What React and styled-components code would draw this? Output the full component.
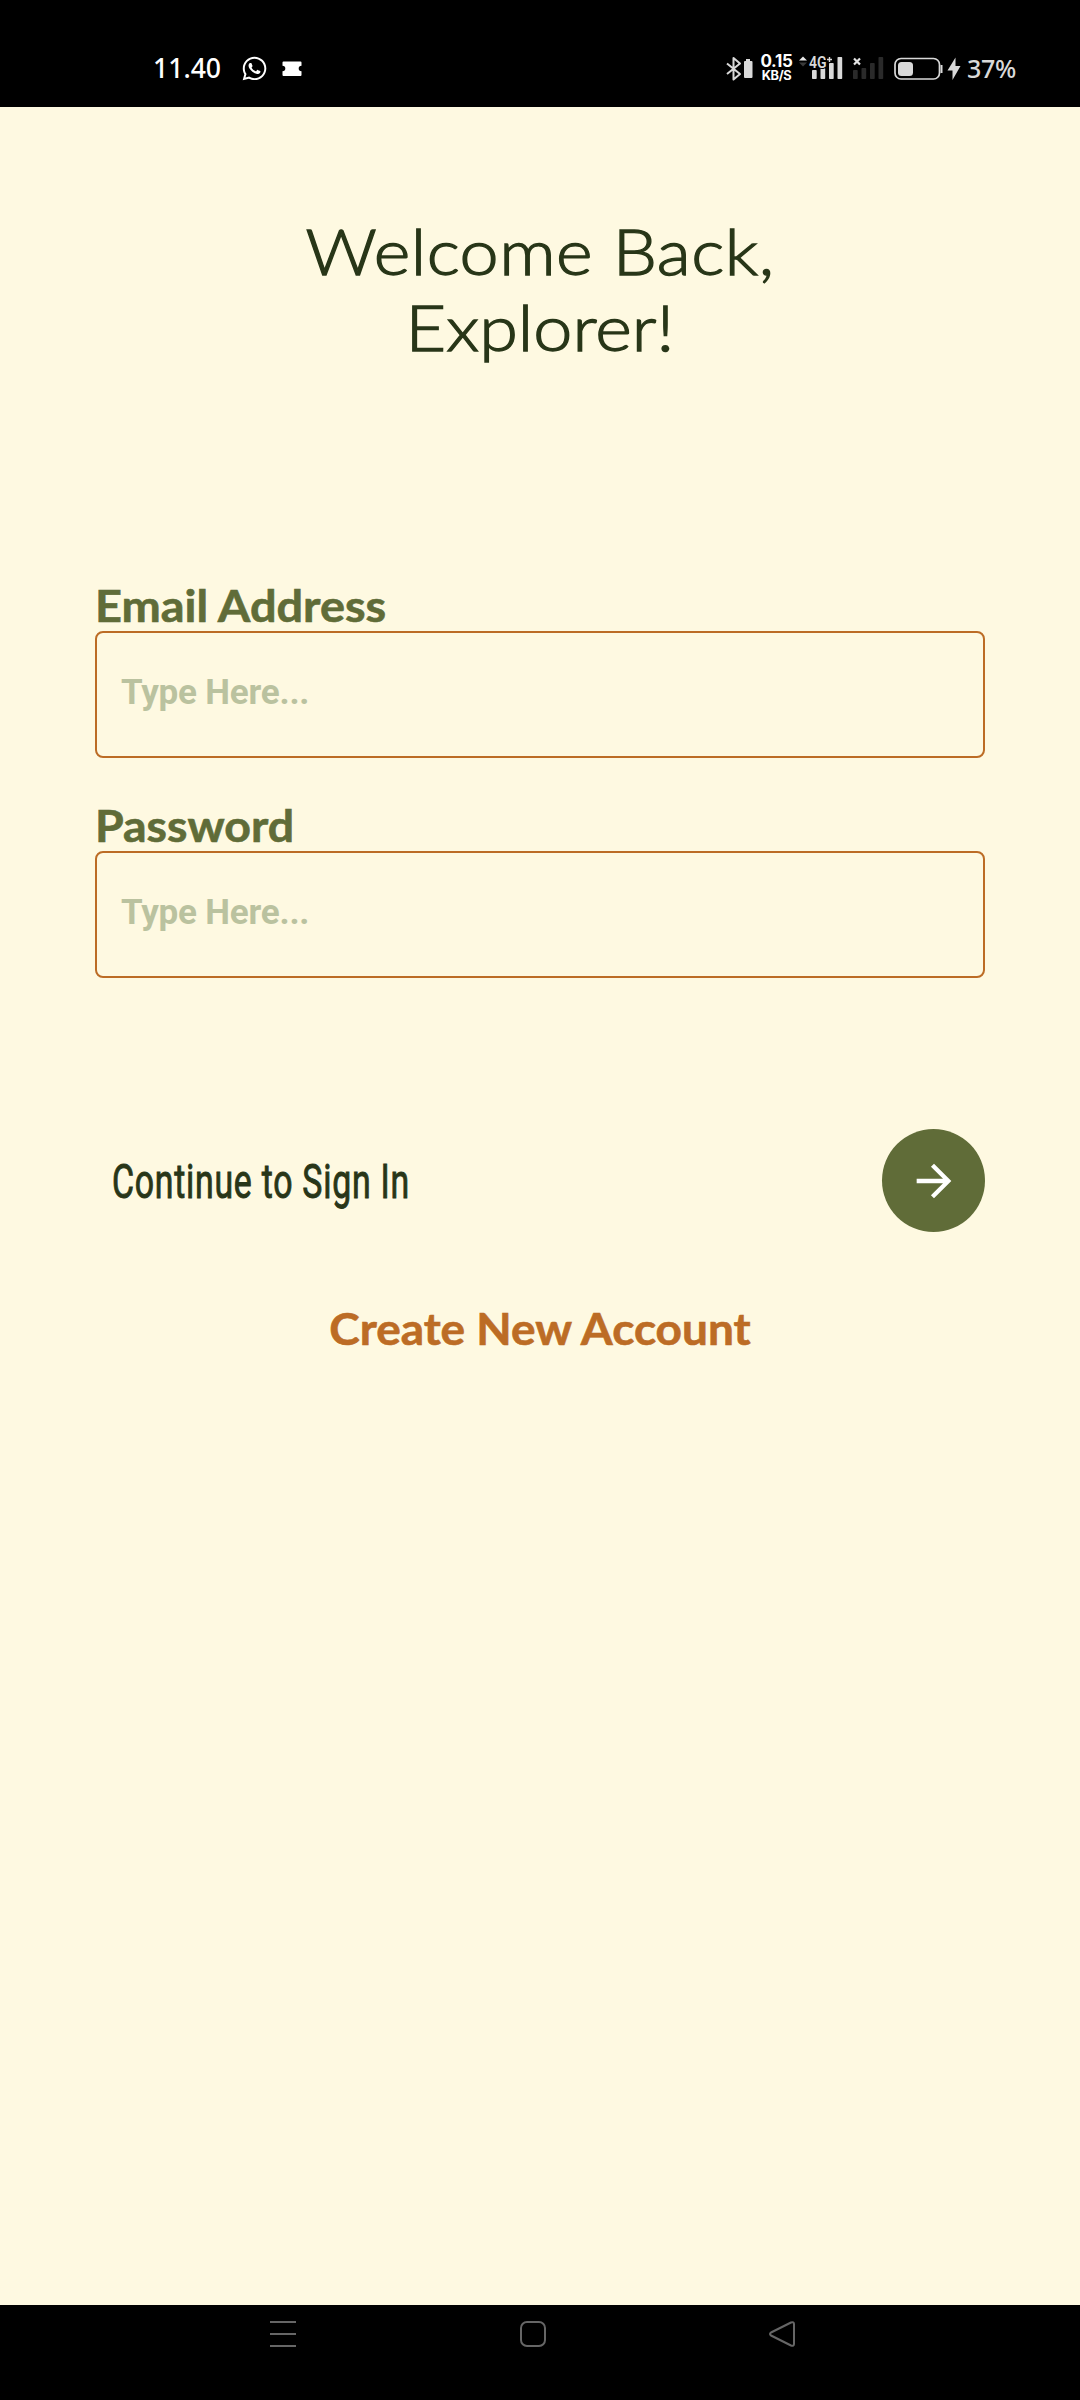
import React from "react";
import styled, { createGlobalStyle } from "styled-components";
import { MdArrowForward } from "react-icons/md";
import { FaWhatsapp } from "react-icons/fa";

const colors = {
  cream: "#fef9e1",
  olive: "#606c38",
  forest: "#283618",
  copper: "#bc6c25",
  hint: "#bac29f",
  status: "#d9d9d9",
  faint: "#2a2a2a",
  nav: "#666666",
};

const GlobalStyle = createGlobalStyle`
  * { box-sizing: border-box; }
  body { margin: 0; background: ${colors.cream}; }
`;

const Screen = styled.div`
  display: flex;
  flex-direction: column;
  width: 1080px;
  height: 2400px;
  overflow: hidden;
  background: ${colors.cream};
  font-family: Lato, "Open Sans", sans-serif;
`;

const StatusBar = styled.header`
  display: flex;
  justify-content: space-between;
  height: 107px;
  padding: 56px 65px 0 153px;
  background: #000;
  color: ${colors.status};
`;

const StatusGroup = styled.div`
  display: flex;
  align-items: center;
  height: 25px;
`;

const Clock = styled.span`
  width: 89px;
  font: 500 26.6px/25px "Noto Sans", sans-serif;
  color: #fff;
`;

const WhatsApp = styled(FaWhatsapp)`
  width: 27px;
  height: 27px;
  margin-left: -1px;
  color: #fff;
`;

const Glyph = styled.svg`
  display: block;
  flex: none;
  margin-left: ${(p) => p.$gap || 0}px;
  overflow: visible;
`;

const Speed = styled.div`
  width: 33px;
  margin-left: 8px;
  color: #fff;
  font-family: Inter, sans-serif;
  text-align: center;
  white-space: nowrap;
`;

const SpeedValue = styled.div`
  font-size: 17px;
  font-weight: 650;
  line-height: 14px;
  letter-spacing: -0.3px;
`;

const SpeedUnit = styled.div`
  font-size: 12.8px;
  font-weight: 700;
  line-height: 15px;
  letter-spacing: -0.4px;
`;

const Percent = styled.span`
  margin-left: 6px;
  width: 48px;
  font: 500 25px/25px "Noto Sans", sans-serif;
  letter-spacing: -0.3px;
  white-space: nowrap;
`;

const Content = styled.main`
  display: flex;
  flex: 1;
  flex-direction: column;
  padding: 106px 95px 0;
`;

const Title = styled.h1`
  margin: 0;
  color: ${colors.forest};
  font-size: 64px;
  font-weight: 300;
  line-height: 76px;
  text-align: center;
  white-space: nowrap;
  transform: scaleX(1.095);
  -webkit-text-stroke: 1.3px ${colors.forest};
`;

const TitleLine = styled.span`
  display: block;
  letter-spacing: ${(p) => p.$track || 0}px;
`;

const Form = styled.form`
  display: flex;
  flex-direction: column;
  gap: 42px;
  margin-top: 215px;
`;

const Field = styled.label`
  display: flex;
  flex-direction: column;
`;

const FieldLabel = styled.span`
  height: 51px;
  padding-top: 1px;
  color: ${colors.olive};
  font-size: 43px;
  font-weight: 700;
  line-height: 50px;
  white-space: nowrap;
  transform: scaleX(${(p) => p.$stretch});
  transform-origin: left center;
  -webkit-text-stroke: 0.6px ${colors.olive};
`;

const Input = styled.input`
  height: 127px;
  padding: 0 24px 4px;
  border: 2px solid ${colors.copper};
  border-radius: 8px;
  outline: none;
  background: transparent;
  color: ${colors.forest};
  font: 700 35px Roboto, sans-serif;
  letter-spacing: -0.2px;

  &::placeholder {
    color: ${colors.hint};
    opacity: 1;
  }
`;

const SubmitRow = styled.div`
  display: flex;
  align-items: center;
  justify-content: space-between;
  height: 103px;
  margin-top: 151px;
  padding-left: 17px;
`;

const SubmitText = styled.span`
  padding-top: 3px;
  color: ${colors.forest};
  font: 400 49px/60px Roboto, sans-serif;
  letter-spacing: 1.1px;
  transform: scaleX(0.69);
  transform-origin: left center;
  white-space: nowrap;
  -webkit-text-stroke: 1px ${colors.forest};
`;

const SubmitButton = styled.button`
  display: flex;
  align-items: center;
  justify-content: center;
  width: 103px;
  height: 103px;
  padding: 0;
  border: 0;
  border-radius: 50%;
  background: ${colors.olive};
  color: #fff;
`;

const CreateLink = styled.a`
  margin-top: 71px;
  color: ${colors.copper};
  font-size: 43px;
  font-weight: 700;
  line-height: 51px;
  text-align: center;
  transform: scaleX(1.069);
  -webkit-text-stroke: 0.6px ${colors.copper};
`;

const NavBar = styled.nav`
  display: flex;
  justify-content: space-between;
  height: 95px;
  padding: 16px 285px 0 270px;
  background: #000;
`;

function Ticket() {
  return (
    <Glyph $gap={14} width="20" height="16" viewBox="0 0 20 16">
      <path
        d="M1.5 0.5h17a1 1 0 0 1 1 1v3.2a2.7 2.7 0 0 0 0 5.6v3.700a1 1 0 0 1-1 1h-17a1 1 0 0 1-1-1v-3.700a2.700 2.700 0 0 0 0-5.600v-3.200a1 1 0 0 1 1-1z"
        fill="#fff"
      />
    </Glyph>
  );
}

function Bluetooth() {
  return (
    <Glyph width="26" height="26" viewBox="0 0 26 26">
      <path d="M1 7.500L14 18L7.500 23.500V2L14 7.500L1 18" fill="none" stroke={colors.status} strokeWidth="2" strokeLinejoin="round" />
      <path d="M20 3h4v2h1.500a1 1 0 0 1 1 1v15a1 1 0 0 1-1 1h-6.500a1 1 0 0 1-1-1v-15a1 1 0 0 1 1-1h1z" fill={colors.status} />
    </Glyph>
  );
}

const barShapes = [
  { x: 0, y: 14, h: 9 },
  { x: 8.5, y: 12, h: 11 },
  { x: 17, y: 7, h: 16 },
  { x: 25.5, y: 1, h: 22 },
];

function Bars({ x, color }) {
  return barShapes.map((b) => (
    <rect key={b.x} x={x + b.x} y={b.y} width="4.7" height={b.h} rx="0.8" fill={color} />
  ));
}

function Signals() {
  return (
    <Glyph $gap={5} width="86" height="25" viewBox="0 0 86 25">
      <path d="M1 4.500L5 0.500L9 4.500z" fill="#e8e8e8" />
      <path d="M1 6.500L5 10.500L9 6.500z" fill="#3a3a3a" />
      <Bars x={14} color={colors.status} />
      <text x="11" y="12" fill={colors.status} stroke="#000" strokeWidth="2" paintOrder="stroke" fontFamily="Roboto, sans-serif" fontSize="16" fontWeight="600" textLength="17.500" lengthAdjust="spacingAndGlyphs">4G</text>
      <path d="M29 3.500h5M31.500 1v5" stroke={colors.status} strokeWidth="1.400" />
      <path d="M56 2.500l6 6M62 2.500l-6 6" stroke="#e4e4e4" strokeWidth="2.200" />
      <Bars x={55} color={colors.faint} />
    </Glyph>
  );
}

function Battery() {
  return (
    <Glyph $gap={10} width="50" height="24" viewBox="0 0 50 24">
      <rect x="1" y="1.500" width="44.500" height="20.500" rx="6" fill="none" stroke={colors.status} strokeWidth="1.700" />
      <rect x="4" y="5" width="15" height="14" rx="3.500" fill={colors.status} />
      <path d="M47.500 8v8" stroke={colors.status} strokeWidth="2" />
    </Glyph>
  );
}

function Bolt() {
  return (
    <Glyph $gap={3} width="14" height="24" viewBox="0 0 14 24">
      <path d="M8.500 0.500L0.500 13.500H5.500V23L13.500 9H8.500z" fill={colors.status} />
    </Glyph>
  );
}

function NavIcon({ d }) {
  return (
    <Glyph width="26" height="26" viewBox="0 0 26 26">
      <path d={d} fill="none" stroke={colors.nav} strokeWidth="2" strokeLinejoin="round" />
    </Glyph>
  );
}

export default function App() {
  return (
    <Screen>
      <GlobalStyle />
      <StatusBar>
        <StatusGroup>
          <Clock>11.40</Clock>
          <WhatsApp />
          <Ticket />
        </StatusGroup>
        <StatusGroup>
          <Bluetooth />
          <Speed>
            <SpeedValue>0.15</SpeedValue>
            <SpeedUnit>KB/S</SpeedUnit>
          </Speed>
          <Signals />
          <Battery />
          <Bolt />
          <Percent>37%</Percent>
        </StatusGroup>
      </StatusBar>
      <Content>
        <Title>
          <TitleLine $track={0.45}>Welcome Back,</TitleLine>
          <TitleLine>Explorer!</TitleLine>
        </Title>
        <Form>
          <Field>
            <FieldLabel $stretch={1.09}>Email Address</FieldLabel>
            <Input type="email" placeholder="Type Here..." />
          </Field>
          <Field>
            <FieldLabel $stretch={1.08}>Password</FieldLabel>
            <Input type="password" placeholder="Type Here..." />
          </Field>
        </Form>
        <SubmitRow>
          <SubmitText>Continue to Sign In</SubmitText>
          <SubmitButton aria-label="Sign in">
            <MdArrowForward size={52} />
          </SubmitButton>
        </SubmitRow>
        <CreateLink>Create New Account</CreateLink>
      </Content>
      <NavBar>
        <NavIcon d="M0 1h26M0 13h26M0 25h26" />
        <NavIcon d="M7 1h12a6 6 0 0 1 6 6v12a6 6 0 0 1-6 6h-12a6 6 0 0 1-6-6v-12a6 6 0 0 1 6-6z" />
        <NavIcon d="M22 1.500L2 11.500Q0 13 2 14.500L22 24.500Q25 25.500 25 23V3Q25 0.500 22 1.500z" />
      </NavBar>
    </Screen>
  );
}
